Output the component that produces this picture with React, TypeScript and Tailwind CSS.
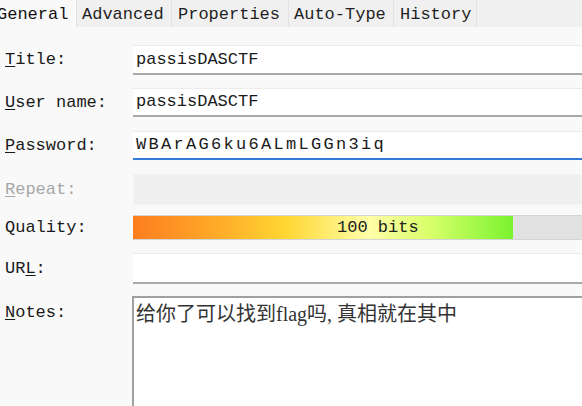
const mono = { fontFamily: '"Liberation Mono", "DejaVu Sans Mono", monospace' }

function Tab({ label, active, className }: { label: string; active?: boolean; className?: string }) {
  return (
    <div
      className={
        'flex h-[27px] items-center border-r border-[#e2e2e2] pt-[3px] text-[17px] ' +
        (active ? 'bg-[#f9f9f9] text-[#111]' : 'bg-[#f0f0f0] text-[#1f1f1f]') +
        ' ' +
        (className ?? '')
      }
    >
      {label}
    </div>
  )
}

function Label({ children, disabled }: { children: React.ReactNode; disabled?: boolean }) {
  return (
    <div className={'w-[133px] shrink-0 pl-[5px] text-[17px] ' + (disabled ? 'text-[#a7a7a7]' : 'text-[#1a1a1a]')}>
      {children}
    </div>
  )
}

function Field({ value }: { value?: string }) {
  return (
    <div className="flex h-full flex-1 items-center border-t border-[#ececec] border-b-2 border-b-[#a9a9a9] bg-white pl-[3px] text-[17px] text-[#1a1a1a]">
      {value}
    </div>
  )
}

export default function App() {
  return (
    <div className="h-[406px] w-[582px] overflow-hidden bg-[#f9f9f9]" style={mono}>
      <div className="flex h-[27px] bg-[#f0f0f0]">
        <Tab label="General" active className="-ml-[9px] w-[86px] pl-[6px]" />
        <Tab label="Advanced" className="w-[95px] pl-[5px]" />
        <Tab label="Properties" className="w-[117px] pl-[6px]" />
        <Tab label="Auto-Type" className="w-[105px] pl-[5px]" />
        <Tab label="History" className="w-[83px] pl-[6px]" />
      </div>

      <div className="flex flex-col">
        <div className="mt-[18px] flex h-[30px] items-center">
          <Label>
            <span className="underline underline-offset-2">T</span>itle:
          </Label>
          <Field value="passisDASCTF" />
        </div>

        <div className="mt-[13px] flex h-[29px] items-center">
          <Label>
            <span className="underline underline-offset-2">U</span>ser name:
          </Label>
          <Field value="passisDASCTF" />
        </div>

        <div className="mt-[14px] flex h-[29px] items-center">
          <Label>
            <span className="underline underline-offset-2">P</span>assword:
          </Label>
          <div className="flex h-full flex-1 items-center border-t border-[#ececec] border-b-2 border-b-[#2f7bd6] bg-white pl-[3px] text-[17px] tracking-[2.3px] text-[#1a1a1a]">
            WBArAG6ku6ALmLGGn3iq
          </div>
        </div>

        <div className="mt-[14px] flex h-[31px] items-center">
          <Label disabled>
            <span className="underline underline-offset-2">R</span>epeat:
          </Label>
          <div className="h-full flex-1 border border-[#f4f4f4] bg-[#efefef]" />
        </div>

        <div className="mt-[10px] flex h-[25px] items-center">
          <Label>Quality:</Label>
          <div className="relative h-full flex-1 border-y border-[#d4d4d4] bg-[#e1e1e1]">
            <div className="h-full w-[380px] bg-[linear-gradient(90deg,#fe7d1f_0%,#ffb12a_25%,#ffd632_40%,#ffffa8_62%,#d9ff6a_78%,#7af32f_100%)]" />
            <div className="absolute left-[204px] top-0 flex h-full items-center text-[17px] text-[#222]">100 bits</div>
          </div>
        </div>

        <div className="mt-[13px] flex h-[31px] items-center">
          <Label>
            UR<span className="underline underline-offset-2">L</span>:
          </Label>
          <Field />
        </div>

        <div className="mt-[12px] flex h-[120px] items-start">
          <div className="pt-[4px]">
            <Label>
              <span className="underline underline-offset-2">N</span>otes:
            </Label>
          </div>
          <div
            className="h-full flex-1 -ml-[1px] border-l-2 border-t-2 border-[#a0a0a0] bg-white pl-[2px] pt-[1px] text-[20px] text-[#333]"
            style={{ fontFamily: '"Liberation Serif", "Noto Sans CJK SC", serif' }}
          >
            给你了可以找到flag吗, 真相就在其中
          </div>
        </div>
      </div>
    </div>
  )
}
